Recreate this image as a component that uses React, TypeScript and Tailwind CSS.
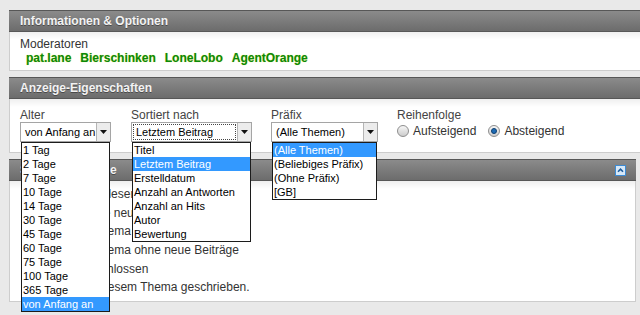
import React from "react";

const alterItems = ["1 Tag", "2 Tage", "7 Tage", "10 Tage", "14 Tage", "30 Tage", "45 Tage", "60 Tage", "75 Tage", "100 Tage", "365 Tage", "von Anfang an"];
const sortItems = ["Titel", "Letztem Beitrag", "Erstelldatum", "Anzahl an Antworten", "Anzahl an Hits", "Autor", "Bewertung"];
const prefixItems = ["(Alle Themen)", "(Beliebiges Präfix)", "(Ohne Präfix)", "[GB]"];

const legend = [
  { text: "Enthält ungelesene Beiträge", color: "#e0a030" },
  { text: "Enthält keine neuen Beiträge", color: "#9a9a9a" },
  { text: "Beliebtes Thema mit neuen Beiträgen", color: "#e0a030" },
  { text: "Beliebtes Thema ohne neue Beiträge", color: "#d03020" },
  { text: "Thema geschlossen", color: "#9a9a9a" },
  { text: "Du hast in diesem Thema geschrieben.", color: "#9a9a9a" },
];

function PanelHeader({ title, collapse }: { title: string; collapse?: boolean }) {
  return (
    <div className="h-[22px] flex items-center justify-between pl-[11px] pr-[10px] bg-gradient-to-b from-[#8b8b8b] to-[#6c6c6c] border-y border-[#575757] text-[12px] font-bold text-[#f3f3f3] [text-shadow:0_1px_0_#4a4a4a]">
      <span>{title}</span>
      {collapse && (
        <svg width="11" height="11" viewBox="0 0 11 11">
          <rect x="0.5" y="0.5" width="10" height="10" fill="#d7e8f7" stroke="#3d8bd3" />
          <path d="M3 6.8 L5.5 4.2 L8 6.8" stroke="#1b5c9e" strokeWidth="1.6" fill="none" />
        </svg>
      )}
    </div>
  );
}

function Arrow() {
  return (
    <span className="w-[14px] h-full flex items-center justify-center bg-[#ececec] border-l border-[#b5b5b5]">
      <svg width="7" height="4" viewBox="0 0 7 4">
        <path d="M0 0 H7 L3.5 4 Z" fill="#111" />
      </svg>
    </span>
  );
}

function DropList({ items, selected }: { items: string[]; selected: string }) {
  return (
    <ul className="absolute left-0 right-0 top-[19px] z-10 bg-white border border-[#1c1c1c] text-[11px]">
      {items.map((item) => (
        <li
          key={item}
          className={`h-[14px] leading-[14px] pl-[1px] whitespace-nowrap ${
            item === selected ? "bg-[#3399ff] text-white" : "text-black"
          }`}
        >
          {item}
        </li>
      ))}
    </ul>
  );
}

function Radio({ label, checked }: { label: string; checked?: boolean }) {
  return (
    <span className="flex items-center gap-[4px]">
      <span className="w-[12px] h-[12px] rounded-full border border-[#8e8e8e] bg-gradient-to-b from-[#f6f6f6] to-[#cdcdcd] flex items-center justify-center">
        {checked && <span className="w-[6px] h-[6px] rounded-full bg-[#1d6cb6] border border-[#0f3f70]" />}
      </span>
      <span>{label}</span>
    </span>
  );
}

export default function App() {
  return (
    <div className="w-[640px] h-[315px] overflow-hidden bg-[#e9e9e9] pt-[10px] font-['Liberation_Sans',Arial,sans-serif] text-[12px] text-[#333]">
      {/* Informationen */}
      <div className="ml-[9px] w-[660px]">
        <PanelHeader title="Informationen & Optionen" />
        <div className="h-[39px] bg-[linear-gradient(#efefef,#ffffff_8px)] border-l border-b border-[#cdcdcd] pl-[10px] pt-[5px]">
          <div className="leading-[14px]">Moderatoren</div>
          <div className="flex gap-[9px] pl-[6px] leading-[14px] font-bold text-[#0a8a0a] [text-shadow:0_0_1px_#d8d84a]">
            <span>pat.lane</span>
            <span>Bierschinken</span>
            <span>LoneLobo</span>
            <span>AgentOrange</span>
          </div>
        </div>
      </div>

      {/* Anzeige-Eigenschaften */}
      <div className="ml-[9px] mt-[6px] w-[660px] relative z-10">
        <PanelHeader title="Anzeige-Eigenschaften" />
        <div className="h-[54px] bg-[linear-gradient(#efefef,#ffffff_8px)] border-l border-b border-[#cdcdcd] pl-[10px] pt-[9px] flex">
          <div className="w-[111px]">
            <div className="leading-[14px] text-[#444]">Alter</div>
            <div className="relative w-[91px] h-[20px] flex border border-[#a5a5a5] bg-white">
              <span className="flex-1 pl-[4px] text-[11px] leading-[18px] text-black whitespace-nowrap">von Anfang an</span>
              <Arrow />
              <DropList items={alterItems} selected="von Anfang an" />
            </div>
          </div>
          <div className="w-[140px]">
            <div className="leading-[14px] text-[#444]">Sortiert nach</div>
            <div className="relative w-[121px] h-[20px] flex border border-[#a5a5a5] bg-white">
              <span className="flex-1 p-[1px]">
                <span className="block h-full border border-dotted border-[#444] pl-[2px] text-[11px] leading-[14px] text-black whitespace-nowrap">
                  Letztem Beitrag
                </span>
              </span>
              <Arrow />
              <DropList items={sortItems} selected="Letztem Beitrag" />
            </div>
          </div>
          <div className="w-[126px]">
            <div className="leading-[14px] text-[#444]">Präfix</div>
            <div className="relative w-[107px] h-[20px] flex border border-[#a5a5a5] bg-white">
              <span className="flex-1 pl-[4px] text-[11px] leading-[18px] text-black whitespace-nowrap">(Alle Themen)</span>
              <Arrow />
              <DropList items={prefixItems} selected="(Alle Themen)" />
            </div>
          </div>
          <div>
            <div className="leading-[14px] text-[#444]">Reihenfolge</div>
            <div className="flex gap-[12px] mt-[2px] leading-[14px]">
              <Radio label="Aufsteigend" />
              <Radio label="Absteigend" checked />
            </div>
          </div>
        </div>
      </div>

      {/* Symbol-Legende */}
      <div className="ml-[9px] mt-[6px] w-[627px]">
        <PanelHeader title="Symbol-Legende" collapse />
        <div className="h-[121px] bg-[linear-gradient(#efefef,#ffffff_8px)] border-l border-r border-b border-[#cdcdcd] pt-[4px] pl-[11px]">
          {legend.map((row) => (
            <div key={row.text} className="h-[18.6px] flex items-center gap-[4px]">
              <span className="w-[16px] h-[13px] rounded-[2px] border border-[#9a9a9a] bg-white flex items-center pl-[1px]">
                <span className="w-[4px] h-[5px] rounded-full" style={{ background: row.color }} />
              </span>
              <span className="whitespace-nowrap">{row.text}</span>
            </div>
          ))}
        </div>
      </div>
    </div>
  );
}
